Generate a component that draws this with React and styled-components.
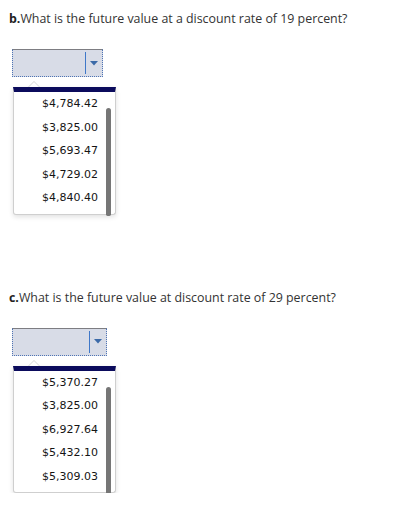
import React from "react";
import styled, { createGlobalStyle } from "styled-components";

const Global = createGlobalStyle`
  html, body { margin: 0; padding: 0; background: #fff; }
  body { font-family: "Open Sans", sans-serif; }
`;

const Page = styled.div`
  display: flex;
  flex-direction: column;
  padding: 11px 0 0 9px;
`;

const Section = styled.section`
  display: flex;
  flex-direction: column;
  align-items: flex-start;
  margin-bottom: ${(p) => p.$gap || 0}px;
`;

const Question = styled.p`
  margin: 0;
  font-family: "Open Sans", sans-serif;
  font-size: 12.4px;
  line-height: 16px;
  color: #333;
  b { font-weight: 700; color: #222; }
`;

const SelectBox = styled.div`
  box-sizing: border-box;
  margin: 22px 0 0 3px;
  width: ${(p) => p.$w}px;
  height: 28px;
  background: #d8dce7;
  border: 1px dotted #4f74b4;
  border-top: 1px solid #7d7d82;
  display: flex;
  align-items: center;
  justify-content: flex-end;
`;

const Divider = styled.span`
  width: 1px;
  height: 22px;
  background: #3f78c9;
`;

const ArrowCell = styled.span`
  width: 16px;
  display: flex;
  justify-content: center;
  align-items: center;
  svg { display: block; }
`;

const Dropdown = styled.div`
  position: relative;
  box-sizing: border-box;
  margin: 10px 0 0 4px;
  width: 103px;
  background: #fff;
  border: 1px solid #cfcfcf;
  border-top: 5px solid #0b0b5c;
  border-radius: 0 0 3px 3px;
  box-shadow: 0 2px 5px rgba(0, 0, 0, 0.12);
  display: flex;
`;

const Caret = styled.span`
  position: absolute;
  left: 14px;
  top: -11px;
  width: 0;
  height: 0;
  border-left: 6px solid transparent;
  border-right: 6px solid transparent;
  border-bottom: 6px solid #d6d6d6;
  &::after {
    content: "";
    position: absolute;
    left: -5px;
    top: 1px;
    border-left: 5px solid transparent;
    border-right: 5px solid transparent;
    border-bottom: 5px solid #fff;
  }
`;

const Options = styled.ul`
  list-style: none;
  margin: 0;
  padding: 0 0 4px 0;
  flex: 1;
`;

const Option = styled.li`
  height: 23.5px;
  line-height: 23.5px;
  text-align: right;
  padding-right: 8px;
  font-family: "DejaVu Sans", Verdana, sans-serif;
  font-size: 11px;
  color: #151515;
`;

const Track = styled.div`
  width: 9px;
  display: flex;
  padding-top: 16px;
  margin-bottom: -2px;
`;

const Thumb = styled.div`
  width: 5px;
  flex: none;
  align-self: stretch;
  background: #767676;
  border-radius: 3px 3px 2px 2px;
`;

const DropIcon = () => (
  <svg width="8" height="5" viewBox="0 0 8 5">
    <path d="M0 0 H8 L4 4.5 Z" fill="#3b6aa8" />
  </svg>
);

const Block = ({ label, text, width, options, gap }) => (
  <Section $gap={gap}>
    <Question>
      <b>{label}</b>
      {text}
    </Question>
    <SelectBox $w={width}>
      <Divider />
      <ArrowCell>
        <DropIcon />
      </ArrowCell>
    </SelectBox>
    <Dropdown>
      <Caret />
      <Options>
        {options.map((o) => (
          <Option key={o}>{o}</Option>
        ))}
      </Options>
      <Track>
        <Thumb />
      </Track>
    </Dropdown>
  </Section>
);

export default function App() {
  return (
    <Page>
      <Global />
      <Block
        label="b."
        text="What is the future value at a discount rate of 19 percent?"
        width={91}
        gap={75}
        options={["$4,784.42", "$3,825.00", "$5,693.47", "$4,729.02", "$4,840.40"]}
      />
      <Block
        label="c."
        text="What is the future value at discount rate of 29 percent?"
        width={95}
        gap={0}
        options={["$5,370.27", "$3,825.00", "$6,927.64", "$5,432.10", "$5,309.03"]}
      />
    </Page>
  );
}
